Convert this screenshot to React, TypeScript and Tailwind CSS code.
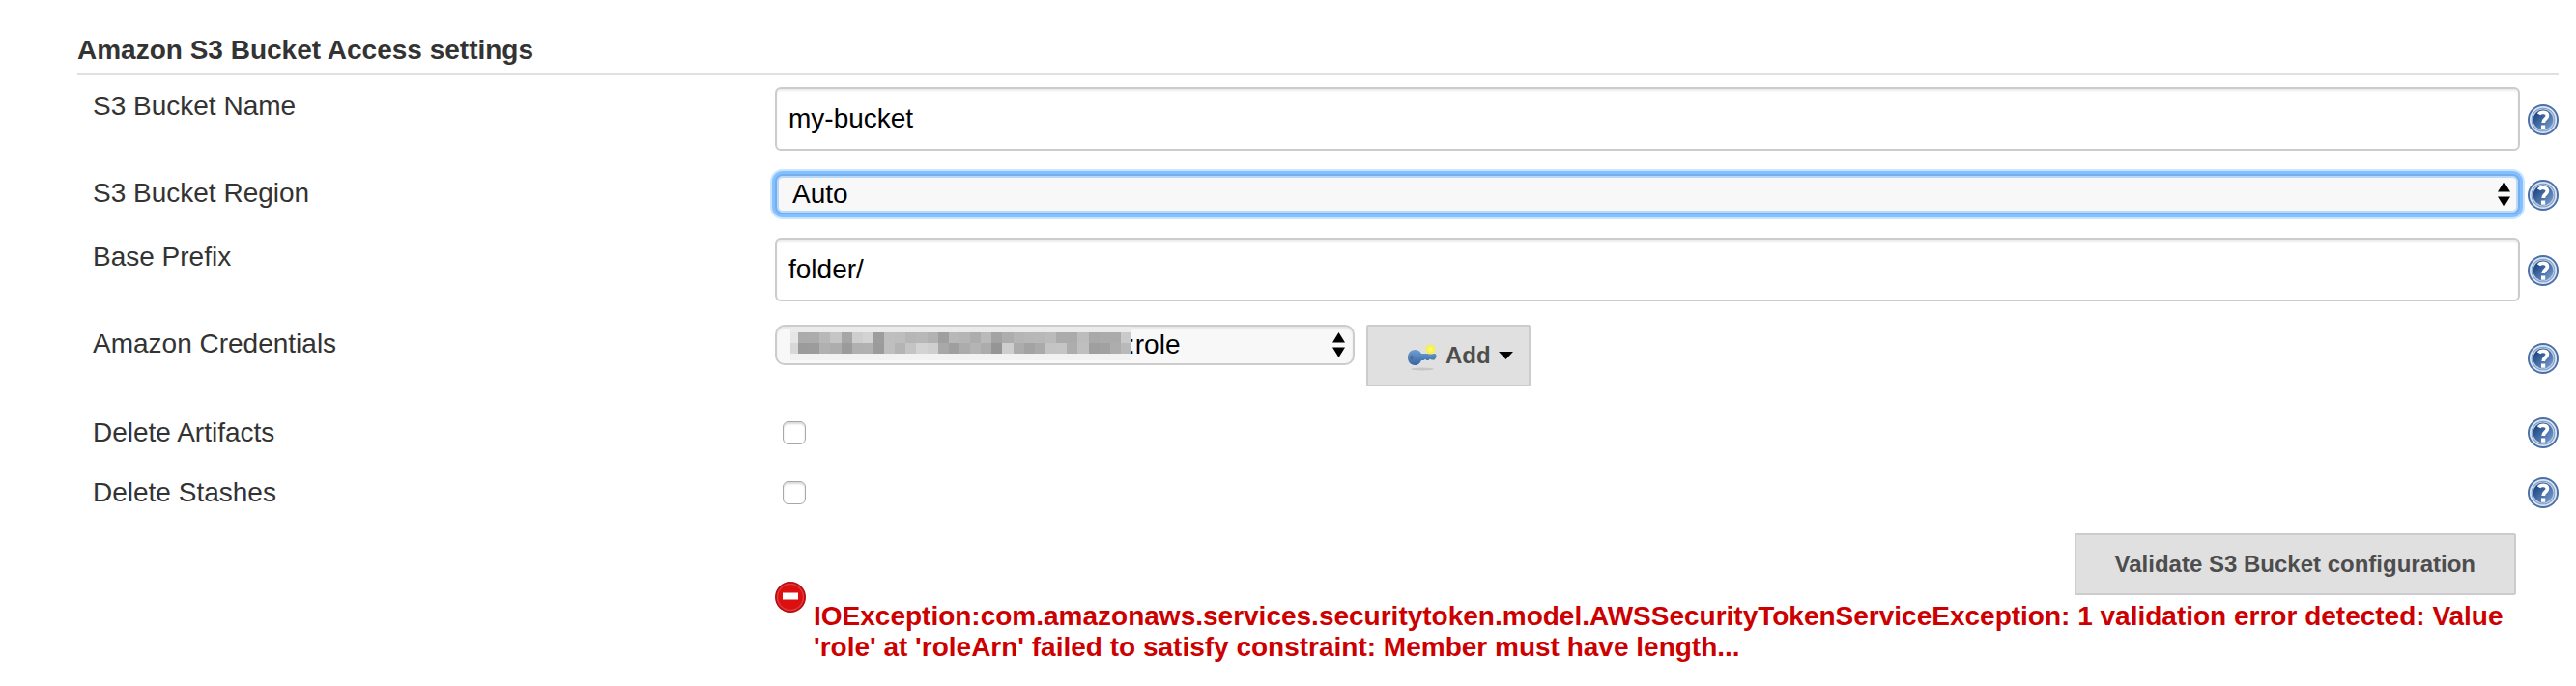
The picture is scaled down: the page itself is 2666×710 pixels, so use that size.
import type { ReactNode } from "react";

const MOSAIC_TOP = ["#ababab", "#acacac", "#b8b8b8", "#c5c5c5", "#a6a6a6", "#cecece", "#d3d3d3", "#9d9d9d", "#bfbfbf", "#bebebe", "#b6b6b6", "#b8b8b8", "#b2b2b2", "#9f9f9f", "#b8b8b8", "#b5b5b5", "#adadad", "#bababa", "#a3a3a3", "#adadad", "#b5b5b5", "#b7b7b7", "#b8b8b8", "#bbbbbb", "#ababab", "#ababab", "#bdbdbd", "#a9a9a9", "#ababab", "#ababab", "#cacaca"];
const MOSAIC_BOTTOM = ["#9b9b9b", "#9c9c9c", "#b0b0b0", "#adadad", "#9b9b9b", "#b0b0b0", "#b1b1b1", "#9b9b9b", "#bfbfbf", "#b4b4b4", "#c4c4c4", "#d3d3d3", "#cfcfcf", "#a8a8a8", "#9f9f9f", "#acacac", "#b4b4b4", "#acacac", "#959595", "#cecece", "#acacac", "#a3a3a3", "#aaaaaa", "#c4c4c4", "#c5c5c5", "#adadad", "#bfbfbf", "#9f9f9f", "#a1a1a1", "#adadad", "#b9b9b9"];

function Redacted() {
  return (
    <svg className="pointer-events-none absolute top-0.5 left-4 h-[35px] w-[353px]" viewBox="0 0 353 35" shapeRendering="crispEdges" aria-hidden="true">
      <rect width="353" height="35" fill="#f2f2f2" />
      <rect width="353" height="6" fill="#ebebeb" />
      <rect y="6" width="8" height="11" fill="#e6e6e6" />
      <rect y="17" width="8" height="11" fill="#d8d8d8" />
      {MOSAIC_TOP.map((c, i) => <rect key={i} x={8 + i * 11.13} y="6" width="12" height="11" fill={c} />)}
      {MOSAIC_BOTTOM.map((c, i) => <rect key={i} x={8 + i * 11.13} y="17" width="12" height="11" fill={c} />)}
    </svg>
  );
}

function SelectArrows() {
  return (
    <svg className="pointer-events-none absolute top-2 right-2.5 h-[26px] w-[13px]" viewBox="0 0 13 26" aria-hidden="true">
      <path d="M6.5 0 13 10.5H0zM0 15.5h13L6.5 26z" fill="#000" />
    </svg>
  );
}

function HelpLink({ topic }: { topic: string }) {
  return (
    <a href="#help" aria-label={`Help for feature: ${topic}`} className="justify-self-end self-center pt-0.5">
      <svg className="block size-8" viewBox="0 0 32 32" aria-hidden="true">
        <defs>
          <linearGradient id="help-fill" x1="0" y1="0" x2="1" y2="1">
            <stop offset="0.2" stopColor="#204a87" />
            <stop offset="1" stopColor="#83a8d6" />
          </linearGradient>
        </defs>
        <circle cx="16" cy="16" r="16" fill="#4a70a8" />
        <circle cx="16" cy="16" r="13.2" fill="#6c8dbc" stroke="#dbe5f1" strokeWidth="1.8" />
        <circle cx="16" cy="16" r="11" fill="url(#help-fill)" stroke="#b9cae2" strokeWidth="1.2" />
        <path d="M11.6 10.4C13 7.6 20.4 7.200 20.4 11.800c0 3.400-4.200 3-4.200 7.200" fill="none" stroke="#fff" strokeWidth="3.800" />
        <rect x="14" y="21.500" width="4.200" height="4.200" fill="#fff" />
      </svg>
    </a>
  );
}

function Row({ label, id, className, children }: { label: string; id: string; className?: string; children: ReactNode }) {
  return (
    <div className={`grid grid-cols-[minmax(0,722fr)_minmax(0,1806fr)_40px] items-start ${className ?? ""}`}>
      <label htmlFor={id} className="pt-1 pl-4">{label}</label>
      {children}
      <HelpLink topic={label} />
    </div>
  );
}

const textBox = "h-[66px] w-full rounded-md border-2 border-[#ccc] bg-white px-3 text-black shadow-[inset_0_2px_2px_rgba(0,0,0,0.075)] outline-none";
const checkBox = "mt-2 ml-2 size-6 appearance-none rounded-md border border-[#a8a8a8] bg-white shadow-[inset_0_2px_2px_rgba(0,0,0,0.15)]";
const button = "flex h-16 items-center rounded-xs border-2 border-[#ccc] bg-[#e0e0e0] text-2xl font-bold text-[#4d4d4d]";

export default function App() {
  return (
    <form className="bg-white pt-9 pr-[18px] pb-6 pl-20 font-['Liberation_Sans',Arial,sans-serif] text-[28px] leading-8 text-[#333]">
      <h2 className="mb-3 border-b-2 border-[#e0e0e0] pb-2 font-bold">Amazon S3 Bucket Access settings</h2>
      <div className="flex flex-col gap-6">
        <Row label="S3 Bucket Name" id="bucket">
          <input id="bucket" type="text" defaultValue="my-bucket" className={textBox} />
        </Row>
        <Row label="S3 Bucket Region" id="region">
          <div className="relative">
            <select id="region" className="block h-[42px] w-full appearance-none rounded-lg border-2 border-[#74aeec] bg-[#f8f8f8] pl-4 text-black shadow-[0_0_0_3px_#83c0ff,0_0_0_5px_#cce5ff,inset_0_0_0_2px_#b9d9f8] outline-none">
              <option>Auto</option>
            </select>
            <SelectArrows />
          </div>
        </Row>
        <Row label="Base Prefix" id="prefix">
          <input id="prefix" type="text" defaultValue="folder/" className={textBox} />
        </Row>
        <Row label="Amazon Credentials" id="credentials" className="min-h-[68px]">
          <div className="flex items-start gap-3">
            <div className="relative">
              <select id="credentials" className="block h-[42px] w-[600px] appearance-none rounded-[10px] border-2 border-[#ccc] bg-[#f8f8f8] pl-[363px] text-black shadow-[inset_0_2px_2px_rgba(0,0,0,0.075)] outline-none">
                <option>:role</option>
              </select>
              <Redacted />
              <SelectArrows />
            </div>
            <button type="button" className={`${button} pr-4 pl-10`}>
              <svg className="mr-2 size-8" viewBox="0 0 32 32" aria-hidden="true">
                <defs>
                  <linearGradient id="key-fill" x1="0" y1="0" x2="0" y2="1">
                    <stop offset="0" stopColor="#6f9fd4" />
                    <stop offset="1" stopColor="#3565a4" />
                  </linearGradient>
                  <radialGradient id="glow">
                    <stop offset="0" stopColor="#fffb7a" />
                    <stop offset="0.6" stopColor="#f8f04a" />
                    <stop offset="1" stopColor="#f8f04a" stopOpacity="0.1" />
                  </radialGradient>
                </defs>
                <ellipse cx="16" cy="30" rx="12" ry="1.500" fill="#c6c6c6" />
                <path d="M8.500 10c3.500 0 5.500 2 6.500 4h14c1.500 0 2 3 1 4.500l-1.500 2h-3L24 19.500l-1.500 1.500h-2L19 19.800 17.500 21H15c-1 2.500-3 5-6.500 5C-1.500 26-1.500 10 8.500 10z" fill="url(#key-fill)" />
                <ellipse cx="5" cy="18" rx="1.500" ry="2.500" fill="#5a6a78" />
                <circle cx="24.500" cy="9.500" r="6" fill="url(#glow)" />
              </svg>
              Add
              <svg className="ml-2 h-2 w-[15px]" viewBox="0 0 15 8" aria-hidden="true"><path d="M0 0h15L7.500 8z" fill="#000" /></svg>
            </button>
          </div>
        </Row>
        <Row label="Delete Artifacts" id="artifacts" className="min-h-[38px]">
          <input id="artifacts" type="checkbox" className={checkBox} />
        </Row>
        <Row label="Delete Stashes" id="stashes" className="min-h-[38px]">
          <input id="stashes" type="checkbox" className={checkBox} />
        </Row>
        <div className="grid grid-cols-[minmax(0,722fr)_minmax(0,1806fr)_40px]">
          <div className="col-start-2 flex gap-2">
            <svg className="mt-[50px] size-8 shrink-0" viewBox="0 0 32 32" aria-hidden="true">
              <circle cx="16" cy="16" r="16" fill="#b50d12" />
              <circle cx="16" cy="16" r="13.500" fill="#dc1010" stroke="#e23a3a" strokeWidth="1.500" />
              <rect x="8" y="11.500" width="16" height="7" fill="#fff" />
            </svg>
            <div className="flex min-w-0 grow flex-col">
              <button type="button" className={`${button} mr-1 self-end px-10`}>Validate S3 Bucket configuration</button>
              <p role="alert" className="mt-1.5 font-bold text-[#c00]">
                IOException:com.amazonaws.services.securitytoken.model.AWSSecurityTokenServiceException: 1 validation error detected: Value 'role' at 'roleArn' failed to satisfy constraint: Member must have length...
              </p>
            </div>
          </div>
        </div>
      </div>
    </form>
  );
}
